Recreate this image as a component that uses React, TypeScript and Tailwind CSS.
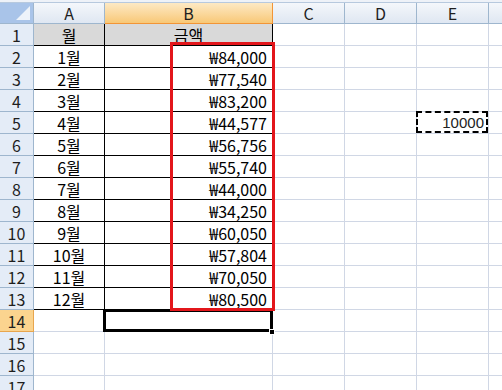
import React from "react";

const months = [
  { label: "1월", amount: "₩84,000" },
  { label: "2월", amount: "₩77,540" },
  { label: "3월", amount: "₩83,200" },
  { label: "4월", amount: "₩44,577" },
  { label: "5월", amount: "₩56,756" },
  { label: "6월", amount: "₩55,740" },
  { label: "7월", amount: "₩44,000" },
  { label: "8월", amount: "₩34,250" },
  { label: "9월", amount: "₩60,050" },
  { label: "10월", amount: "₩57,804" },
  { label: "11월", amount: "₩70,050" },
  { label: "12월", amount: "₩80,500" },
];

const grid = "grid grid-cols-[34px_71px_168px_72px_72px_72px_72px]";
const font = "font-['Noto_Sans_CJK_KR','Noto_Sans',sans-serif]";
const gridCell = "border-r border-b border-[#d0d7e5] h-[22px]";
const rowHead =
  "h-[22px] border-r border-b border-[#9eb6ce] bg-[#e4ecf7] flex items-center justify-center text-[16px] leading-[20px] text-[#1e1e1e]";

function ColHeader({ label, active }: { label: string; active?: boolean }) {
  return (
    <div
      className={
        active
          ? "h-[21px] border-r border-b border-[#f29536] bg-gradient-to-b from-[#fde9c4] to-[#f8c876] flex items-center justify-center text-[16px] leading-[19px] text-[#1e1e1e]"
          : "h-[21px] border-r border-b border-[#9eb6ce] bg-gradient-to-b from-[#f4f7fb] to-[#dfe7f2] flex items-center justify-center text-[16px] leading-[19px] text-[#1e1e1e]"
      }
    >
      {label}
    </div>
  );
}

export default function App() {
  return (
    <div className={`w-[502px] h-[390px] overflow-hidden bg-white ${font}`}>
      <div className="h-[3px] bg-[#eef2f8] border-b border-[#b7c9de]" />
      <div className="relative">
        {/* header row */}
        <div className={grid}>
          <div className="h-[21px] border-r border-b border-[#9eb6ce] bg-[#a9c4e9] relative">
            <div className="absolute right-[3px] bottom-[3px] w-0 h-0 border-l-[14px] border-l-transparent border-b-[14px] border-b-[#eef3fa]" />
          </div>
          <ColHeader label="A" />
          <ColHeader label="B" active />
          <ColHeader label="C" />
          <ColHeader label="D" />
          <ColHeader label="E" />
          <ColHeader label="" />
        </div>

        {/* row 1 */}
        <div className={grid}>
          <div className={rowHead}>1</div>
          <div className="h-[22px] border-r border-b border-black bg-[#d9d9d9] flex items-center justify-center text-[16px] leading-[20px] text-black">
            월
          </div>
          <div className="h-[22px] border-r border-b border-black bg-[#d9d9d9] flex items-center justify-center text-[16px] leading-[20px] text-black">
            금액
          </div>
          <div className={gridCell} />
          <div className={gridCell} />
          <div className={gridCell} />
          <div className={gridCell} />
        </div>

        {months.map((m, i) => (
          <div key={m.label} className={grid}>
            <div className={rowHead}>{i + 2}</div>
            <div className="h-[22px] border-r border-b border-black flex items-center justify-center text-[16px] leading-[20px] text-black">
              {m.label}
            </div>
            <div className="h-[22px] border-r border-b border-black flex items-center justify-end pr-[5px] text-[16px] leading-[20px] text-black">
              {m.amount}
            </div>
            <div className={gridCell} />
            <div className={gridCell} />
            {i === 3 ? (
              <div className={`${gridCell} relative`}>
                <div className="absolute -left-px -top-px right-0 bottom-0 border-2 border-dashed border-black flex items-center justify-end pr-[2px] font-['Liberation_Sans',sans-serif] text-[15px] leading-[17px] text-[#222]">
                  10000
                </div>
              </div>
            ) : (
              <div className={gridCell} />
            )}
            <div className={gridCell} />
          </div>
        ))}

        {/* row 14, selected */}
        <div className={grid}>
          <div className="h-[22px] border-r border-b border-[#e8a64e] bg-[#fbd48f] flex items-center justify-center text-[16px] leading-[20px] text-[#1e1e1e]">
            14
          </div>
          <div className={gridCell} />
          <div className={`${gridCell} relative`}>
            <div className="absolute -left-[2px] -top-[1px] -right-px -bottom-px border-[3px] border-black" />
            <div className="absolute -right-[3px] -bottom-[4px] w-[6px] h-[6px] bg-black border border-white" />
          </div>
          <div className={gridCell} />
          <div className={gridCell} />
          <div className={gridCell} />
          <div className={gridCell} />
        </div>

        {[15, 16, 17].map((n) => (
          <div key={n} className={grid}>
            <div className={rowHead}>{n}</div>
            <div className={gridCell} />
            <div className={gridCell} />
            <div className={gridCell} />
            <div className={gridCell} />
            <div className={gridCell} />
            <div className={gridCell} />
          </div>
        ))}

        {/* red highlight box over B2:B13 */}
        <div className="absolute left-[170px] top-[39px] w-[105px] h-[269px] border-[3px] border-[#e3161b] pointer-events-none" />
      </div>
    </div>
  );
}
